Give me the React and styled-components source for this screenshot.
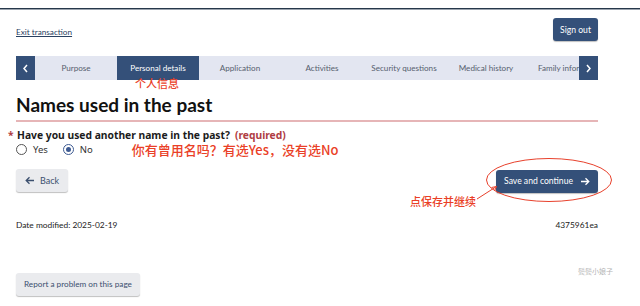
import styled, { createGlobalStyle } from "styled-components";

const GlobalStyle = createGlobalStyle`
  html, body {
    margin: 0;
    padding: 0;
    background: #ffffff;
  }
  body {
    font-family: Lato, "Noto Sans CJK SC", sans-serif;
    color: #333333;
  }
`;

const tabs = [
  "Purpose",
  "Personal details",
  "Application",
  "Activities",
  "Security questions",
  "Medical history",
  "Family information",
];

const Page = styled.div`
  width: 640px;
  height: 306px;
  overflow: hidden;
  padding-top: 8px;
  box-sizing: border-box;
`;

const TopRule = styled.div`
  height: 1px;
  background: #26374a;
  border-bottom: 1px solid #9aa3ae;
`;

const Main = styled.div`
  padding: 0 42px 0 16px;
`;

const Header = styled.div`
  display: flex;
  justify-content: space-between;
  align-items: center;
  margin-top: 8px;
  height: 23px;
`;

const ExitLink = styled.a`
  font-size: 8.2px;
  color: #284162;
  text-decoration: underline;
  margin-top: 5px;
`;

const PrimaryButton = styled.button`
  display: inline-flex;
  align-items: center;
  gap: ${(p) => (p.$gap ? p.$gap : 0)}px;
  height: 23px;
  padding: 0 ${(p) => p.$pad || 8}px;
  border: none;
  border-radius: 3px;
  background: #345079;
  color: #ffffff;
  font-family: Lato, sans-serif;
  font-size: 8.6px;
  box-shadow: 0 1px 1px rgba(0, 0, 0, 0.25);
`;

const Nav = styled.nav`
  display: flex;
  height: 24px;
  margin-top: 15px;
  background: #e3e6f1;
`;

const NavArrow = styled.div`
  flex: 0 0 19px;
  display: flex;
  align-items: center;
  justify-content: center;
  background: #345079;
  color: #ffffff;
`;

const Tabs = styled.div`
  flex: 1;
  min-width: 0;
  display: flex;
`;

const Tab = styled.div`
  position: relative;
  flex: ${(p) => (p.$last ? "1 1 0" : "0 0 82px")};
  min-width: 0;
  display: flex;
  align-items: center;
  justify-content: ${(p) => (p.$last ? "flex-start" : "center")};
  padding-left: ${(p) => (p.$last ? "11px" : "0")};
  font-size: 8.1px;
  white-space: nowrap;
  color: ${(p) => (p.$active ? "#ffffff" : "#56606e")};
  background: ${(p) => (p.$active ? "#345079" : "transparent")};
  overflow: ${(p) => (p.$last ? "hidden" : "visible")};
`;

const Note = styled.span`
  font-family: "Noto Sans CJK SC", sans-serif;
  font-weight: 500;
  color: #ea3f27;
  font-size: 12px;
  white-space: nowrap;
  line-height: 1;
`;

const TabNote = styled(Note)`
  position: absolute;
  top: 22px;
  left: 50%;
  font-size: 11px;
  transform: translateX(-52%);
`;

const Title = styled.h1`
  margin: 14px 0 0;
  padding-bottom: 4px;
  font-family: Lato, sans-serif;
  font-weight: 700;
  font-size: 19px;
  line-height: 22px;
  color: #111111;
  border-bottom: 2px solid #e6b5b7;
`;

const Question = styled.div`
  display: flex;
  align-items: baseline;
  margin: 6px 0 0 -8px;
  font-family: "Noto Sans", sans-serif;
  font-size: 10.3px;
  font-weight: 700;
  color: #1c1c1c;
`;

const Star = styled.span`
  color: #af3c43;
  width: 9px;
`;

const Required = styled.span`
  color: #af3c43;
  margin-left: 5px;
`;

const RadioRow = styled.div`
  display: flex;
  align-items: center;
  margin-top: -1px;
  height: 16px;
`;

const RadioItem = styled.label`
  display: flex;
  align-items: center;
  gap: 6px;
  margin-right: 15px;
  font-family: "Noto Sans", sans-serif;
  font-size: 9.5px;
  color: #333333;
`;

const Circle = styled.span`
  width: 9px;
  height: 9px;
  border: 1px solid;
  border-radius: 50%;
  display: flex;
  align-items: center;
  justify-content: center;
  border-color: ${(p) => (p.$on ? "#3d5a92" : "#555")};

  &::after {
    content: "";
    width: 5px;
    height: 5px;
    border-radius: 50%;
    background: ${(p) => (p.$on ? "#3d5a92" : "transparent")};
  }
`;

const QuestionNote = styled(Note)`
  margin-left: 24px;
  font-size: 13px;
`;

const Actions = styled.div`
  display: flex;
  justify-content: space-between;
  align-items: center;
  margin-top: 11px;
`;

const SecondaryButton = styled.button`
  display: inline-flex;
  align-items: center;
  gap: 5px;
  height: 23px;
  padding: 0 ${(p) => p.$pad || 9}px;
  border: none;
  border-radius: 3px;
  background: #eaebee;
  color: #3b4f6e;
  font-family: Lato, sans-serif;
  font-size: ${(p) => p.$size || 9}px;
  box-shadow: 0 1px 1px rgba(0, 0, 0, 0.25);
`;

const SaveWrap = styled.div`
  position: relative;
`;

const Ellipse = styled.svg`
  position: absolute;
  left: -10px;
  top: -10px;
  overflow: visible;
`;

const SaveNote = styled(Note)`
  position: absolute;
  right: 122px;
  top: 28px;
  font-size: 11px;
`;

const Footer = styled.div`
  display: flex;
  justify-content: space-between;
  margin-top: 27px;
  font-size: 8.4px;
  color: #222;
`;

const BottomRow = styled.div`
  display: flex;
  justify-content: space-between;
  align-items: flex-start;
  margin-top: 43px;
`;

const Watermark = styled.div`
  margin: -7px -15px 0 0;
  font-family: "Noto Sans CJK SC", sans-serif;
  font-size: 7px;
  color: #b4b4b4;
`;

const Chevron = ({ dir }) => (
  <svg width="7" height="9" viewBox="0 0 7 9">
    <path
      d={dir === "left" ? "M5 1 L2 4.5 L5 8" : "M2 1 L5 4.5 L2 8"}
      stroke="#fff"
      strokeWidth="1.5"
      fill="none"
    />
  </svg>
);

const Arrow = ({ dir, color }) => (
  <svg width="10" height="9" viewBox="0 0 10 9">
    <path
      d={
        dir === "left"
          ? "M9 4.5 H1.5 M4.5 1.2 L1.2 4.5 L4.5 7.8"
          : "M1 4.5 H8.5 M5.5 1.2 L8.8 4.5 L5.5 7.8"
      }
      stroke={color}
      strokeWidth="1.3"
      fill="none"
    />
  </svg>
);

export default function App() {
  return (
    <>
      <GlobalStyle />
      <Page>
        <TopRule />
        <Main>
          <Header>
            <ExitLink href="#">Exit transaction</ExitLink>
            <PrimaryButton $pad={7}>Sign out</PrimaryButton>
          </Header>

          <Nav>
            <NavArrow>
              <Chevron dir="left" />
            </NavArrow>
            <Tabs>
              {tabs.map((t, i) => (
                <Tab
                  key={t}
                  $active={t === "Personal details"}
                  $last={i === tabs.length - 1}
                >
                  {t}
                  {t === "Personal details" && <TabNote>个人信息</TabNote>}
                </Tab>
              ))}
            </Tabs>
            <NavArrow>
              <Chevron dir="right" />
            </NavArrow>
          </Nav>

          <Title>Names used in the past</Title>

          <Question>
            <Star>*</Star>
            Have you used another name in the past?
            <Required>(required)</Required>
          </Question>

          <RadioRow>
            <RadioItem>
              <Circle />
              Yes
            </RadioItem>
            <RadioItem>
              <Circle $on />
              No
            </RadioItem>
            <QuestionNote>你有曾用名吗？有选Yes，没有选No</QuestionNote>
          </RadioRow>

          <Actions>
            <SecondaryButton $pad={9}>
              <Arrow dir="left" color="#3b4f6e" />
              Back
            </SecondaryButton>
            <SaveWrap>
              <Ellipse width="126" height="44">
                <ellipse cx="63" cy="22" rx="62.5" ry="21.5" fill="none" stroke="#e8412c" strokeWidth="1" />
                <path d="M-9 41 L10.5 28.5 M5.5 29.5 L10.5 28.5 L8.5 33" stroke="#e8412c" strokeWidth="1" fill="none" />
              </Ellipse>
              <PrimaryButton $pad={8} $gap={7}>
                Save and continue
                <Arrow dir="right" color="#fff" />
              </PrimaryButton>
              <SaveNote>点保存并继续</SaveNote>
            </SaveWrap>
          </Actions>

          <Footer>
            <span>Date modified: 2025-02-19</span>
            <span>4375961ea</span>
          </Footer>

          <BottomRow>
            <SecondaryButton $pad={8} $size={8.2}>
              Report a problem on this page
            </SecondaryButton>
            <Watermark>鬓鬓小娘子</Watermark>
          </BottomRow>
        </Main>
      </Page>
    </>
  );
}
